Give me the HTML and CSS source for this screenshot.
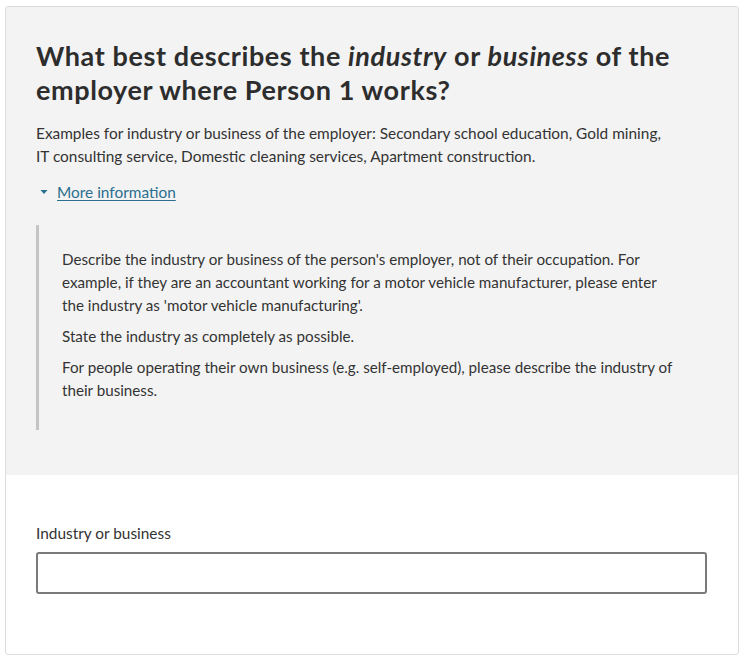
FILE: index.html
```html
<!DOCTYPE html>
<html lang="en">
<head>
<meta charset="utf-8">
<title>Industry or business</title>
<link rel="stylesheet" href="styles.css">
</head>
<body>
<div class="card">
  <div class="question">
    <h1 class="title">What best describes the <em>industry</em> or <em>business</em> of the employer where Person 1 works?</h1>
    <p class="hint">Examples for industry or business of the employer: Secondary school education, Gold mining, IT consulting service, Domestic cleaning services, Apartment construction.</p>
    <div class="more">
      <svg class="caret" width="8" height="6" viewBox="0 0 8 6"><path d="M0.5 1 L7.5 1 L4 5 Z" fill="#2b6f8f"/></svg>
      <a class="more-link" href="#">More information</a>
    </div>
    <div class="details">
      <p>Describe the industry or business of the person's employer, not of their occupation. For example, if they are an accountant working for a motor vehicle manufacturer, please enter the industry as 'motor vehicle manufacturing'.</p>
      <p>State the industry as completely as possible.</p>
      <p>For people operating their own business (e.g. self-employed), please describe the industry of their business.</p>
    </div>
  </div>
  <div class="answer">
    <label class="label" for="industry">Industry or business</label>
    <input class="field" id="industry" type="text">
  </div>
</div>
</body>
</html>
```

FILE: styles.css
```css
html, body {
  margin: 0;
  padding: 0;
  background: #ffffff;
}
body {
  font-family: "Lato", "Open Sans", sans-serif;
  color: #333333;
}
.card {
  margin: 6px 6px 6px 5px;
  border: 1px solid #dcdcdc;
  border-radius: 3px;
  overflow: hidden;
  box-sizing: border-box;
  height: 649px;
}
.question {
  background: #f3f3f3;
  padding: 32px 31px 45px 30px;
}
.title {
  margin: 0;
  font-size: 27px;
  line-height: 34px;
  letter-spacing: 0.6px;
  font-weight: 700;
  color: #2d2d2d;
}
.title em {
  font-style: italic;
}
.hint {
  margin: 14.5px 0 0;
  padding-right: 40px;
  font-size: 15.4px;
  line-height: 23px;
}
.more {
  margin-top: 13px;
  display: flex;
  align-items: center;
  gap: 9px;
  padding-left: 4px;
  font-size: 15.4px;
  line-height: 23px;
}
.caret {
  display: block;
}
.more-link {
  color: #2b6f8f;
  text-decoration: underline;
  text-underline-offset: 2px;
}
.details {
  margin-top: 21.5px;
  border-left: 3px solid #c4c4c4;
  padding: 22.5px 30px 20.5px 23px;
  font-size: 15.2px;
  line-height: 23px;
}
.details p {
  margin: 0 0 8px;
}
.answer {
  padding: 46.5px 31px 0 30px;
}
.label {
  display: block;
  font-size: 15.4px;
  line-height: 23px;
}
.field {
  display: block;
  margin-top: 7.5px;
  width: 100%;
  height: 42px;
  box-sizing: border-box;
  border: 2px solid #7a7a7a;
  border-radius: 3px;
  background: #fff;
  font: inherit;
}
```
